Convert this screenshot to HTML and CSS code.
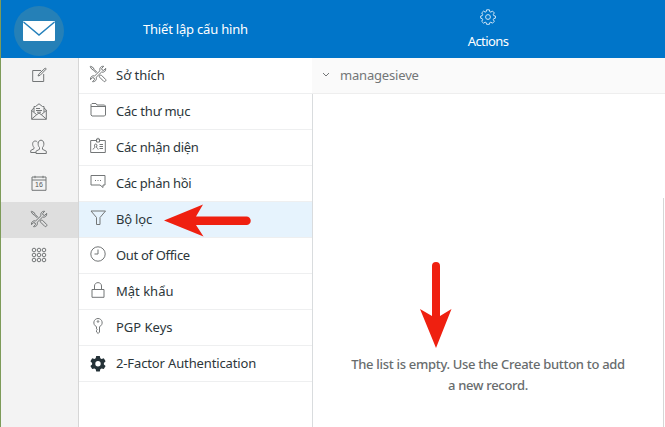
FILE: index.html
```
<!DOCTYPE html>
<html lang="vi">
<head>
<meta charset="utf-8">
<title>Thiết lập cấu hình</title>
<link rel="stylesheet" href="styles.css">
</head>
<body>
<svg class="defs" aria-hidden="true">
  <symbol id="tools" viewBox="0 0 18 18">
    <path d="M1.6 1.2 4.4 2.8 5 4.3 8 7.3M1.6 1.2 1.2 1.8 3 4.4 4.3 4.9 7.2 7.9M10.2 11.2l1.1-1.2 1.2.3 4.2 4.2c.9 1-.9 2.8-1.9 1.9l-4.2-4.2-.4-1z"/>
    <path d="M11 5.700c-.8-2.600 1-4.800 3.700-4.400l-2 2.100.4 1.600 1.600.4 2-2.100c.5 2.600-1.700 4.500-4.200 3.800l-5.300 5.200c.8 2.500-1 4.700-3.700 4.400l2-2.100-.4-1.600-1.600-.4-2 2.100c-.5-2.600 1.600-4.500 4.200-3.800z"/>
  </symbol>
</svg>
<div class="app">
  <header class="topbar">
    <div class="brand"><span class="logo"><svg width="32" height="20" viewBox="0 0 32 20"><rect width="32" height="20" rx="1" fill="#fff"/><path d="M.5 1 16 14 31.500 1" fill="none" stroke="#2580bb" stroke-width="1.500"/></svg></span></div>
    <h1 class="title">Thiết lập cấu hình</h1>
    <div class="actions">
      <svg width="16" height="16" viewBox="0 0 16 16"><path d="M6.600.8h2.800l.4 1.900 1 .4 1.700-1 1.800 1.800-1 1.700.4 1 1.700.4v2.200l-1.700.5-.4 1 1 1.600-1.800 1.900-1.700-1-1 .4-.4 1.700H6.600l-.4-1.700-1-.4-1.600 1-1.900-1.900 1-1.600-.4-1L.7 9.200V7l1.600-.4.400-1-1-1.700 1.900-1.800 1.600 1 1-.4z"/><circle cx="8" cy="8" r="2.400"/></svg>
      <span>Actions</span>
    </div>
  </header>
  <div class="body">
    <nav class="rail">
      <a><svg width="16" height="16" viewBox="0 0 16 16"><path d="M10 3.500H1.700v11h11V7"/><path d="m7 9 1-2.200L14.300 1l1 1-6.200 6.300z"/></svg></a>
      <a><svg width="16" height="17" viewBox="0 0 16 17"><path d="M3 9V3.500h1.500L8 .8l3.500 2.700H13V9M3 5 .7 7v9.300h14.600V7L13 5M.7 7.500l5 4.200L8 10l2.300 1.700 5-4.200M.7 16l5-4.300M15.300 16l-5-4.300M5 5.500h4M5 7.500h6M6 9.200h4"/></svg></a>
      <a><svg width="17" height="16" viewBox="0 0 17 16"><path d="M8 14.500h8.300v-2.300l-3.800-1.900V8.500c2.200-2.200 1.800-7.300-1.500-7.300S7.300 6.300 9.500 8.500v1.800L6 12.200v2.300h2M6 13.500H.7v-2l3.300-1.800V8.500C1.800 6 2.300 2 5.200 2c1 0 1.800.5 2.200 1.200"/></svg></a>
      <a><svg width="16" height="16" viewBox="0 0 16 16"><path d="M1 2h14v13.300H1zM1 5h14M4 .8v2.400M12 .8v2.400"/><text x="8" y="12" text-anchor="middle">16</text></svg></a>
      <a class="active"><svg width="18" height="18"><use href="#tools"/></svg></a>
      <a><svg width="16" height="16" viewBox="0 0 16 16"><g id="dots"><circle cx="3" cy="3" r="1.800"/><circle cx="8" cy="3" r="1.800"/><circle cx="13" cy="3" r="1.800"/></g><use href="#dots" y="5"/><use href="#dots" y="10"/></svg></a>
    </nav>
    <ul class="menu">
      <li><svg width="18" height="18"><use href="#tools"/></svg><span>Sở thích</span></li>
      <li><svg width="18" height="18" viewBox="0 0 18 18"><path d="M2 14V3.500l1-1h4l1 1.500h7.500l1 1v9l-1 1H3zM2 5.500h14.500"/></svg><span class="tight">Các thư mục</span></li>
      <li><svg width="18" height="18" viewBox="0 0 18 18"><path d="M7 3.500H1.700v12h14.600v-12H11M7.500 5V2h3v3zM9 2V.8M10.500 7.500H14M10.500 9.500H14M10.500 11.500H14M4 12.500c0-1.500 2-1.200 2-2.500-1-1.500-.5-3 .7-3s1.700 1.500.7 3c0 1.300 1.800 1 1.800 2.500"/></svg><span class="tighter">Các nhận diện</span></li>
      <li><svg width="18" height="18" viewBox="0 0 18 18"><path d="M2 2.500h14v9.500h-2v2.500L11 12H2zM6 7.500h1M8.500 7.500h1M11 7.500h1"/></svg><span class="tighter">Các phản hồi</span></li>
      <li class="selected"><svg width="18" height="18" viewBox="0 0 18 18"><path d="M2 2h14.500L11 8.500v7H7.500v-7z"/></svg><span class="tight">Bộ lọc</span></li>
      <li><svg width="18" height="18" viewBox="0 0 18 18"><circle cx="9" cy="9" r="7.200"/><path d="M9 4.500V9H5.500"/></svg><span class="tighter">Out of Office</span></li>
      <li><svg width="18" height="18" viewBox="0 0 18 18"><path d="M3 8.500h12v7.800H3zM5.500 8.500V5c0-4.500 7-4.500 7 0v3.500"/></svg><span>Mật khẩu</span></li>
      <li><svg width="18" height="18" viewBox="0 0 18 18"><path d="M7.500 9.700C3 7.500 4.700 1.500 9 1.500s6 6 1.500 8.200V15l-1.300 1.500L7.500 15v-1.500l.7-.8-.7-.8z"/><circle cx="9" cy="4.500" r=".8"/></svg><span>PGP Keys</span></li>
      <li><svg class="gear" width="18" height="18" viewBox="0 0 18 18"><path fill-rule="evenodd" d="M7.200 1h3.600l.5 2.200 1.300.8 2.200-.7 1.800 3-1.700 1.600v1.600l1.700 1.600-1.800 3-2.200-.7-1.300.8-.5 2.200H7.200l-.5-2.200-1.300-.8-2.200.7-1.800-3 1.700-1.600V7.900L1.400 6.300l1.800-3 2.200.7 1.300-.8zM9 6a2.700 2.700 0 1 0 0 5.400A2.700 2.700 0 0 0 9 6z"/></svg><span class="snug">2-Factor Authentication</span></li>
    </ul>
    <main class="content">
      <div class="group"><svg width="8" height="6" viewBox="0 0 8 6"><path d="m1 1 3 3 3-3"/></svg><span>managesieve</span></div>
      <div class="pane"><p>The list is empty. Use the Create button to add<br>a new record.</p><div class="scrollbar"></div></div>
    </main>
  </div>
  <svg class="arrow arrow-left" width="88" height="34" viewBox="0 0 88 34"><path d="m0 16.500 39-16-7 12h50.500a4 4 0 0 1 0 8.500H32l7.500 11.500z"/></svg>
  <svg class="arrow arrow-down" width="32" height="87" viewBox="0 0 32 87"><path d="M16 86 0 47l12 7V4a4 4 0 0 1 8 0v50l11.500-7z"/></svg>
</div>
</body>
</html>
```
FILE: styles.css
```
* { box-sizing: border-box; }
body { margin: 0; font: 13px "Noto Sans", sans-serif; color: #2c363a; background: #fff; overflow: hidden; }
.defs { position: absolute; width: 0; height: 0; }
svg { flex: none; fill: none; stroke: #737677; stroke-width: 1; }
.app { position: relative; width: 665px; height: 427px; border-left: 1px solid #7d9b59; display: flex; flex-direction: column; }
.topbar { height: 58px; flex: none; background: #0075c9; color: #fff; display: grid; grid-template-columns: 78px 234px 1fr; }
.brand { padding: 6px 0 0 13px; }
.logo { width: 50px; height: 50px; border-radius: 50%; background: #2580b7; display: flex; align-items: center; justify-content: center; }
.logo svg { stroke: none; }
.title { margin: 0; font-size: 13px; font-weight: 400; line-height: 58px; padding-left: 64px; letter-spacing: -.2px; }
.actions { display: flex; flex-direction: column; align-items: center; padding: 9px 2px 0 0; line-height: 18px; gap: 7px; letter-spacing: -.6px; }
.actions svg { stroke: #d2e6f5; }
.body { flex: 1; display: grid; grid-template-columns: 78px 234px 1fr; }
.rail { background: #f3f3f3; border-right: 1px solid #d6d6d6; }
.rail a { height: 36px; display: flex; align-items: center; justify-content: center; padding: 0 2px 2px 0; }
.rail .active { background: #dedede; }
.rail text { font: 7px "Liberation Sans", sans-serif; fill: #555; stroke: none; }
.menu { list-style: none; margin: 0; padding: 0; border-right: 1px solid #d9dcde; }
.menu li { height: 36px; border-bottom: 1px solid #eeeff0; display: flex; gap: 8px; padding: 0 0 0 11px; }
.menu li svg { margin: 7px 1px 0 -1px; }
.menu span { line-height: 35px; white-space: nowrap; }
.menu .snug { letter-spacing: -.13px; }
.menu .tight { letter-spacing: -.2px; }
.menu .tighter { letter-spacing: -.32px; }
.menu .selected { background: #e6f3fd; }
.menu .gear { fill: #253238; stroke: none; margin-top: 9px; }
.content { display: flex; flex-direction: column; }
.group { height: 36px; display: flex; align-items: center; gap: 10px; margin-left: -1px; padding: 0 0 2px 10px; background: #fafafa; border-bottom: 1px solid #eee; color: #737677; letter-spacing: -.18px; }
.pane { flex: 1; display: grid; grid-template-columns: 1fr 2px; }
.pane p { margin: 260px 0 0; text-align: center; font-weight: 500; line-height: 21px; letter-spacing: -.3px; color: #686c6d; white-space: nowrap; }
.scrollbar { margin-top: 104px; border-left: 1px solid #d6d6d6; }
.arrow { position: absolute; fill: #ef2010; stroke: none; }
.arrow-left { left: 163px; top: 204px; }
.arrow-down { left: 419px; top: 262px; }
```
